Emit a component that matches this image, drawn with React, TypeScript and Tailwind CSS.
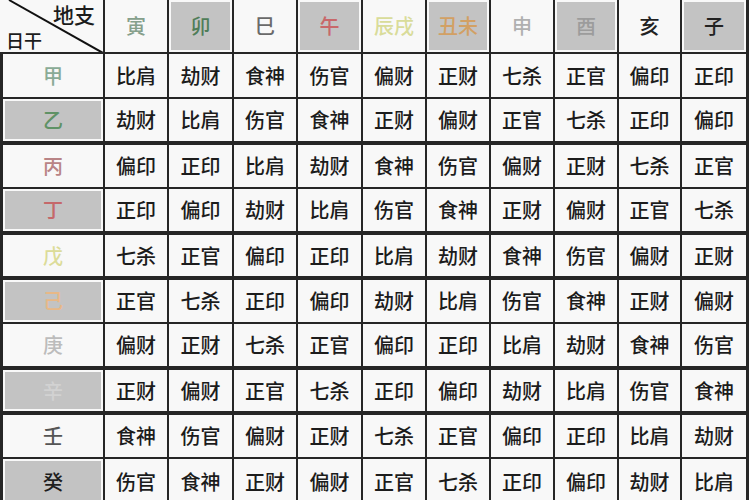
import React from "react";

const cols = [
  "w-[100px]",
  "w-[62px]",
  "w-[63px]",
  "w-[62px]",
  "w-[63px]",
  "w-[62px]",
  "w-[62px]",
  "w-[62px]",
  "w-[62px]",
  "w-[61px]",
  "w-[64px]",
  "w-[62px]",
];

type H = { t: string; c: string; g: boolean };
const header: H[] = [
  { t: "寅", c: "text-[#86a08c]", g: false },
  { t: "卯", c: "text-[#4f7d58]", g: true },
  { t: "巳", c: "text-[#6a6a6a]", g: false },
  { t: "午", c: "text-[#c8686a]", g: true },
  { t: "辰戌", c: "text-[#d9dc9a]", g: false },
  { t: "丑未", c: "text-[#d2a064]", g: true },
  { t: "申", c: "text-[#b0b0b0]", g: false },
  { t: "酉", c: "text-[#9c9c9c]", g: true },
  { t: "亥", c: "text-[#222222]", g: false },
  { t: "子", c: "text-[#222222]", g: true },
];

type R = { s: string; c: string; g: boolean; h: string; mb: string; v: string[] };
const rows: R[] = [
  { s: "甲", c: "text-[#8aab96]", g: false, h: "h-[43px]", mb: "mb-[2px]", v: ["比肩", "劫财", "食神", "伤官", "偏财", "正财", "七杀", "正官", "偏印", "正印"] },
  { s: "乙", c: "text-[#5f9266]", g: true, h: "h-[42px]", mb: "mb-[4px]", v: ["劫财", "比肩", "伤官", "食神", "正财", "偏财", "正官", "七杀", "正印", "偏印"] },
  { s: "丙", c: "text-[#b98486]", g: false, h: "h-[42px]", mb: "mb-[2px]", v: ["偏印", "正印", "比肩", "劫财", "食神", "伤官", "偏财", "正财", "七杀", "正官"] },
  { s: "丁", c: "text-[#c5686a]", g: true, h: "h-[42px]", mb: "mb-[4px]", v: ["正印", "偏印", "劫财", "比肩", "伤官", "食神", "正财", "偏财", "正官", "七杀"] },
  { s: "戊", c: "text-[#dcdc98]", g: false, h: "h-[41px]", mb: "mb-[4px]", v: ["七杀", "正官", "偏印", "正印", "比肩", "劫财", "食神", "伤官", "偏财", "正财"] },
  { s: "己", c: "text-[#e8b886]", g: true, h: "h-[42px]", mb: "mb-[2px]", v: ["正官", "七杀", "正印", "偏印", "劫财", "比肩", "伤官", "食神", "正财", "偏财"] },
  { s: "庚", c: "text-[#bcbcbc]", g: false, h: "h-[42px]", mb: "mb-[4px]", v: ["偏财", "正财", "七杀", "正官", "偏印", "正印", "比肩", "劫财", "食神", "伤官"] },
  { s: "辛", c: "text-[#d2d2d2]", g: true, h: "h-[41px]", mb: "mb-[4px]", v: ["正财", "偏财", "正官", "七杀", "正印", "偏印", "劫财", "比肩", "伤官", "食神"] },
  { s: "壬", c: "text-[#555555]", g: false, h: "h-[42px]", mb: "mb-[2px]", v: ["食神", "伤官", "偏财", "正财", "七杀", "正官", "偏印", "正印", "比肩", "劫财"] },
  { s: "癸", c: "text-[#1e1e1e]", g: true, h: "h-[45px]", mb: "mb-[0px]", v: ["伤官", "食神", "正财", "偏财", "正官", "七杀", "正印", "偏印", "劫财", "比肩"] },
];

const font = { fontFamily: '"Noto Sans CJK SC", "Noto Sans", sans-serif' };

function Cell({ w, gray, children, cls }: { w: string; gray?: boolean; children?: React.ReactNode; cls?: string }) {
  return (
    <div className={`${w} shrink-0 h-full bg-[#f8f8f8] p-[2px]`}>
      <div
        className={`w-full h-full flex items-center justify-center text-[20px] leading-none font-medium ${
          gray ? "bg-[#c3c3c3]" : "bg-[#f8f8f8]"
        } ${cls ?? "text-[#1c1c1c]"}`}
      >
        {children}
      </div>
    </div>
  );
}

export default function App() {
  return (
    <div className="w-[750px] h-[500px] overflow-hidden bg-white" style={font}>
      <div className="w-[749px] h-[500px] bg-[#262626] flex flex-col">
        <div className="h-[52px] mb-[2px] flex gap-x-[2px] bg-[#262626] shrink-0 pr-[3px]">
          <div className="w-[103px] shrink-0 h-full bg-[#f8f8f8] relative">
            <svg className="absolute inset-0" width="103" height="52" viewBox="0 0 103 52">
              <line x1="9" y1="0" x2="103" y2="53" stroke="#111" strokeWidth="2" />
            </svg>
            <span className="absolute left-[53px] top-[4px] text-[21px] leading-none font-medium text-[#1c1c1c]">地支</span>
            <span className="absolute left-[6px] top-[31px] text-[18px] leading-none font-medium text-[#1c1c1c]">日干</span>
          </div>
          {header.map((h, i) => (
            <Cell key={i} w={cols[i + 1]} gray={h.g} cls={h.c}>
              {h.t}
            </Cell>
          ))}
        </div>
        {rows.map((r, ri) => (
          <div key={ri} className={`${r.h} ${r.mb} flex gap-x-[2px] shrink-0 pl-[3px] pr-[3px] bg-[#262626]`}>
            <Cell w={cols[0]} gray={r.g} cls={r.c}>
              {r.s}
            </Cell>
            {r.v.map((v, i) => (
              <Cell key={i} w={cols[i + 1]}>
                {v}
              </Cell>
            ))}
          </div>
        ))}
      </div>
    </div>
  );
}
